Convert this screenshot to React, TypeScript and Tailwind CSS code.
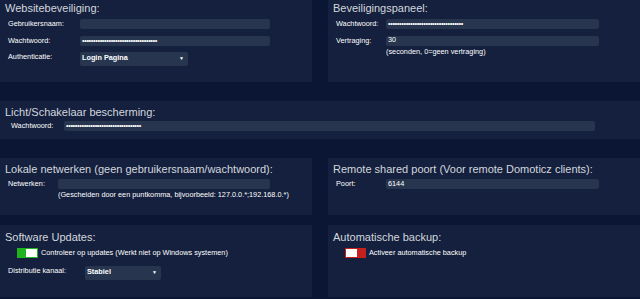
import type { ReactNode } from "react";

const DOTS = "••••••••••••••••••••••••••••••••••";

function Panel({ children, className = "" }: { children: ReactNode; className?: string }) {
    return <section className={`bg-[#14203d] px-[5px] ${className}`}>{children}</section>;
}

function Title({ children }: { children: ReactNode }) {
    return <h2 className="text-[11px] leading-[13px] text-[#d3d7de]">{children}</h2>;
}

function Field({ children, className = "" }: { children?: ReactNode; className?: string }) {
    return (
        <div className={`flex h-[10px] items-center rounded-[2px] bg-[#27354f] px-[2px] text-[7.3px] text-white ${className}`}>
            {children}
        </div>
    );
}

function Select({ value, className = "" }: { value: string; className?: string }) {
    return (
        <div className={`flex h-[14px] items-center justify-between rounded-[2px] bg-[#27354f] pl-[2px] pr-[4px] text-[7.3px] font-bold text-white ${className}`}>
            <span>{value}</span>
            <span className="text-[5px]">▼</span>
        </div>
    );
}

function Toggle({ on }: { on: boolean }) {
    return (
        <div
            className={`flex h-[10px] w-[21px] border ${on ? "justify-end border-[#1fb31f] bg-[#1fb31f]" : "justify-start border-[#c42020] bg-[#c42020]"}`}
        >
            <div className="h-full w-[11px] bg-white" />
        </div>
    );
}

export default function App() {
    return (
        <div className="h-[299px] w-[640px] overflow-hidden bg-[#0a1633] font-['Liberation_Sans',Arial,sans-serif] text-[7.3px] text-white">
            <div className="grid grid-cols-[312px_312px] gap-x-[16px]">
                <Panel className="h-[82px] pt-[2px]">
                    <Title>Websitebeveiliging:</Title>
                    <div className="mt-[4px] flex flex-col gap-[6px] pl-[3px]">
                        <div className="flex items-center">
                            <span className="w-[72px]">Gebruikersnaam:</span>
                            <Field className="w-[190px]" />
                        </div>
                        <div className="flex items-center">
                            <span className="w-[72px]">Wachtwoord:</span>
                            <Field className="w-[190px] tracking-[-0.35px]">{DOTS}</Field>
                        </div>
                        <div className="-mt-[1px] flex items-center">
                            <span className="-mt-[3px] w-[72px]">Authenticatie:</span>
                            <Select value="Login Pagina" className="w-[108px]" />
                        </div>
                    </div>
                </Panel>
                <Panel className="h-[82px] pt-[2px]">
                    <Title>Beveiligingspaneel:</Title>
                    <div className="mt-[4px] flex flex-col gap-[6px] pl-[3px]">
                        <div className="flex items-center">
                            <span className="w-[50px]">Wachtwoord:</span>
                            <Field className="w-[213px] tracking-[-0.35px]">{DOTS}</Field>
                        </div>
                        <div className="flex items-start">
                            <span className="w-[50px]">Vertraging:</span>
                            <div>
                                <Field className="w-[213px]">30</Field>
                                <p className="mt-[1px] leading-[9px]">(seconden, 0=geen vertraging)</p>
                            </div>
                        </div>
                    </div>
                </Panel>
            </div>

            <Panel className="mt-[19px] h-[38px] pt-[5px]">
                <Title>Licht/Schakelaar bescherming:</Title>
                <div className="mt-[2px] flex items-center pl-[6px]">
                    <span className="w-[53px]">Wachtwoord:</span>
                    <Field className="w-[531px] tracking-[-0.35px]">{DOTS}</Field>
                </div>
            </Panel>

            <div className="mt-[19px] grid grid-cols-[312px_312px] gap-x-[16px]">
                <Panel className="h-[57px] pt-[5px]">
                    <Title>Lokale netwerken (geen gebruikersnaam/wachtwoord):</Title>
                    <div className="mt-[3px] flex items-start pl-[3px]">
                        <span className="w-[50px]">Netwerken:</span>
                        <div>
                            <Field className="w-[212px]" />
                            <p className="mt-[1px] leading-[9px]">
                                (Gescheiden door een puntkomma, bijvoorbeeld: 127.0.0.*;192.168.0.*)
                            </p>
                        </div>
                    </div>
                </Panel>
                <Panel className="h-[57px] pt-[5px]">
                    <Title>Remote shared poort (Voor remote Domoticz clients):</Title>
                    <div className="mt-[3px] flex items-center pl-[3px]">
                        <span className="w-[50px]">Poort:</span>
                        <Field className="w-[213px]">6144</Field>
                    </div>
                </Panel>
            </div>

            <div className="mt-[10px] grid grid-cols-[312px_312px] gap-x-[16px]">
                <Panel className="h-[72px] pt-[6px]">
                    <Title>Software Updates:</Title>
                    <div className="mt-[4px] flex items-center gap-[3px] pl-[12px]">
                        <Toggle on />
                        <span>Controleer op updates (Werkt niet op Windows systemen)</span>
                    </div>
                    <div className="mt-[7px] flex items-center pl-[3px]">
                        <span className="-mt-[3px] w-[77px]">Distributie kanaal:</span>
                        <Select value="Stabiel" className="w-[76px]" />
                    </div>
                </Panel>
                <Panel className="h-[72px] pt-[6px]">
                    <Title>Automatische backup:</Title>
                    <div className="mt-[4px] flex items-center gap-[3px] pl-[12px]">
                        <Toggle on={false} />
                        <span>Activeer automatische backup</span>
                    </div>
                </Panel>
            </div>
        </div>
    );
}
